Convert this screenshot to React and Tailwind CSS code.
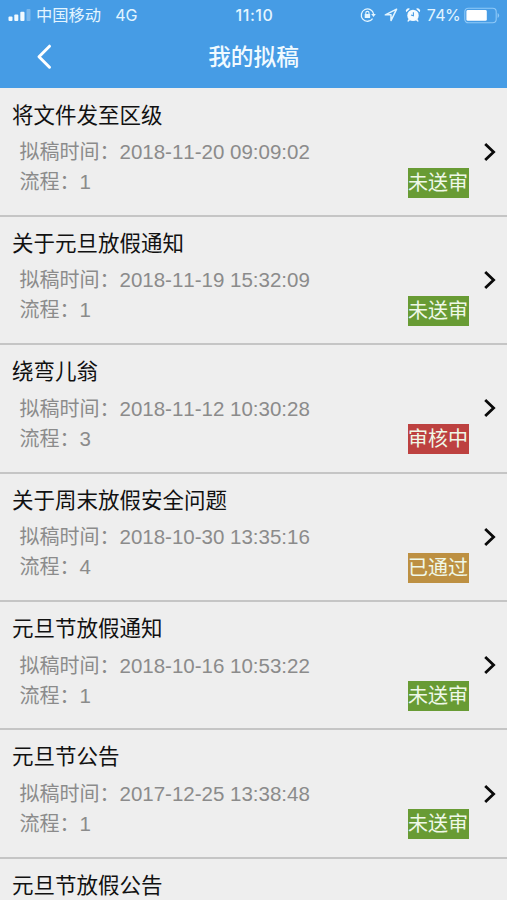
const drafts = [
  { id: 1, title: "将文件发至区级", time: "2018-11-20 09:09:02", step: 1, status: "pending" },
  { id: 2, title: "关于元旦放假通知", time: "2018-11-19 15:32:09", step: 1, status: "pending" },
  { id: 3, title: "绕弯儿翁", time: "2018-11-12 10:30:28", step: 3, status: "reviewing" },
  { id: 4, title: "关于周末放假安全问题", time: "2018-10-30 13:35:16", step: 4, status: "passed" },
  { id: 5, title: "元旦节放假通知", time: "2018-10-16 10:53:22", step: 1, status: "pending" },
  { id: 6, title: "元旦节公告", time: "2017-12-25 13:38:48", step: 1, status: "pending" },
];

const nextTitle = "元旦节放假公告";

const statuses = {
  pending: { label: "未送审", color: "bg-[#689b34]" },
  reviewing: { label: "审核中", color: "bg-[#bd4140]" },
  passed: { label: "已通过", color: "bg-[#bd9042]" },
};

// Signal, carrier, clock and battery
function StatusBar() {
  return (
    <div className="grid h-[30px] grid-cols-[1fr_auto_1fr] items-center text-[16px] leading-[30px] text-[#e3f5ff]">
      <div className="flex items-center pl-2">
        <svg width="24" height="14" viewBox="0 0 24 14" fill="#f1faff">
          <rect x="0.5" y="8.5" width="4" height="4.5" rx="1" />
          <rect x="6.3" y="6.5" width="4" height="6.5" rx="1" />
          <rect x="12.3" y="3.8" width="4.2" height="9.2" rx="1" />
          <rect x="18.5" y="1" width="4" height="12" rx="1" opacity="0.3" />
        </svg>
        <span className="ml-1 text-[16.3px]">中国移动</span>
        <span className="ml-[14px] font-['Inter',sans-serif] text-[16px]">4G</span>
      </div>
      <span className="pl-[2px] font-['Inter',sans-serif] text-[16px] font-medium tracking-[0.6px]">11:10</span>
      <div className="flex items-center justify-end pr-[7px]">
        {/* Rotation lock */}
        <svg width="16" height="16" viewBox="0 0 16 16" fill="none" stroke="#e3f5ff" strokeWidth="1.3">
          <path d="M12.6 11.6A6.2 6.2 0 1 1 13.6 7" />
          <path d="M11.2 7h4.6l-2.3 3z" fill="#e3f5ff" stroke="none" />
          <rect x="4.7" y="7" width="5.4" height="4" rx="0.5" fill="#e3f5ff" stroke="none" />
          <path d="M5.8 7.2V6a1.6 1.6 0 0 1 3.2 0v1.2" strokeWidth="1.1" />
        </svg>
        {/* Location */}
        <svg className="ml-[8px]" width="14" height="14" viewBox="0 0 14 14" fill="none" stroke="#e3f5ff" strokeWidth="1.5" strokeLinejoin="round">
          <path d="M12.6 1.2 1.3 6.8H7v5.8z" />
        </svg>
        {/* Alarm */}
        <svg className="ml-[7px]" width="16" height="16" viewBox="0 0 16 16">
          <g fill="#f4fbff">
            <circle cx="8" cy="8.4" r="5.7" />
            <path d="M1.2 5.2A2.6 2.6 0 0 1 5 1.8zM14.8 5.2A2.6 2.6 0 0 0 11 1.8z" />
            <path d="m3.5 12-1.2 2.2 1 .6 2-1.8zM12.5 12l1.2 2.2-1 .6-2-1.8z" />
          </g>
          <path d="M8.4 5.2v3.6L6 8" fill="none" stroke="#469ce5" strokeWidth="1.1" />
        </svg>
        <span className="ml-[6px] font-['Inter',sans-serif] text-[16px] tracking-[-0.6px]">74%</span>
        <svg className="ml-[4px]" width="36" height="17" viewBox="0 0 36 17">
          <rect x="0.8" y="1.2" width="31.4" height="14.6" rx="3.5" fill="none" stroke="#8fc9f8" strokeWidth="1.1" />
          <rect x="2.4" y="3" width="20.4" height="10.8" rx="1.4" fill="#fff" />
          <path d="M33.6 6v5a2.8 2.8 0 0 0 0-5z" fill="#8fc9f8" />
        </svg>
      </div>
    </div>
  );
}

function NavBar() {
  return (
    <div className="grid h-[58px] grid-cols-[1fr_auto_1fr] items-center pb-[5px]">
      <button type="button" className="pl-9">
        <svg width="16" height="26" viewBox="0 0 16 26" fill="none" stroke="#fff" strokeWidth="3" strokeLinecap="round" strokeLinejoin="round">
          <path d="M13.5 2.2 3 12.7 13.5 23.2" />
        </svg>
      </button>
      <h1 className="pt-px text-[22.7px] leading-[30px] font-medium text-[#f0faff]">我的拟稿</h1>
    </div>
  );
}

function DraftTitle({ children }) {
  return <h2 className="text-[21.5px] leading-[32px] text-[#111]">{children}</h2>;
}

function DraftRow({ draft }) {
  const status = statuses[draft.status];

  return (
    <li className="flex h-[128.4px] items-stretch border-b-2 border-[#c5c5c5]">
      <div className="flex-1 pt-[11px] pl-[12px]">
        <DraftTitle>{draft.title}</DraftTitle>
        <div className="pt-[5.5px] pl-[7.5px] text-[20px] leading-[30px] text-[#8b8b8b]">
          <p className="flex">
            拟稿时间：<span className="text-[20.5px]">{draft.time}</span>
          </p>
          <p className="flex">
            流程：<span className="text-[20.5px]">{draft.step}</span>
          </p>
        </div>
      </div>
      <div className="flex items-end pb-[17.4px]">
        <span className={`h-[30px] w-[61px] text-center text-[20px] leading-[31px] whitespace-nowrap text-[#eff8e8] ${status.color}`}>
          {status.label}
        </span>
      </div>
      <div className="flex w-[38.5px] items-center pl-[14px]">
        <svg width="14" height="20" viewBox="0 0 14 20" fill="none" stroke="#0a0a0a" strokeWidth="2.8">
          <path d="m2.2 2 8.4 8-8.4 8" />
        </svg>
      </div>
    </li>
  );
}

export default function App() {
  return (
    <div className="h-[900px] w-[507px] overflow-hidden bg-[#eee] font-['Liberation_Sans','Noto_Sans_CJK_SC',sans-serif] [font-kerning:none]">
      <header className="h-[88px] bg-[#469ce5]">
        <StatusBar />
        <NavBar />
      </header>
      <ul className="pt-[0.5px]">
        {drafts.map((draft) => (
          <DraftRow key={draft.id} draft={draft} />
        ))}
        <li className="pt-[11px] pl-[12px]">
          <DraftTitle>{nextTitle}</DraftTitle>
        </li>
      </ul>
    </div>
  );
}
